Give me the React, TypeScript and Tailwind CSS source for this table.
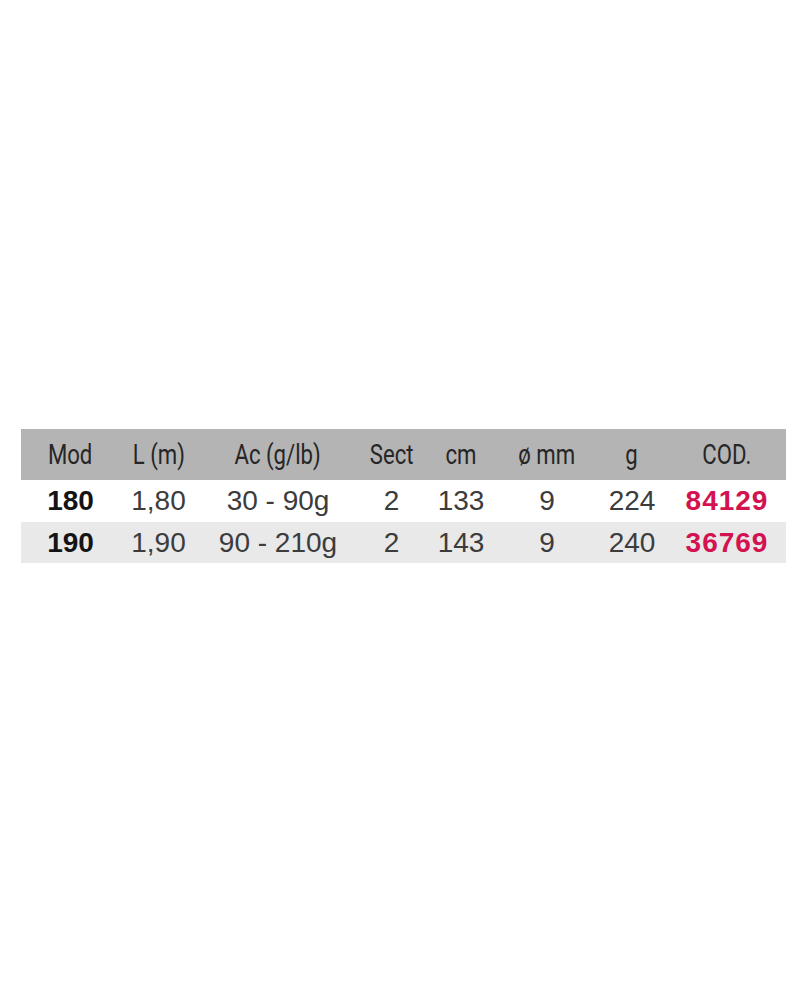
const columns = ['Mod', 'L (m)', 'Ac (g/lb)', 'Sect', 'cm', 'ø mm', 'g', 'COD.'];

const rows = [
  { mod: '180', len: '1,80', ac: '30 - 90g', sect: '2', cm: '133', mm: '9', g: '224', cod: '84129' },
  { mod: '190', len: '1,90', ac: '90 - 210g', sect: '2', cm: '143', mm: '9', g: '240', cod: '36769' },
];

// column widths chosen so each cell's centre lands on the reference
const grid = 'grid grid-cols-[99px_77px_162px_65px_74px_98px_72px_118px]';

function Cell({ children, className = '' }: { children: React.ReactNode; className?: string }) {
  return <div className={`flex items-center justify-center whitespace-nowrap ${className}`}>{children}</div>;
}

export default function App() {
  return (
    <div className="min-h-[1000px] w-[800px] bg-white pt-[429px] pl-[21px] pr-[14px] font-['Liberation_Sans',Arial,sans-serif]">
      <div className="w-[765px]">
        <div className={`${grid} h-[51px] bg-[#b4b4b4] text-[#262626]`}>
          {columns.map((c) => (
            <Cell key={c} className="font-['Roboto','Liberation_Sans',sans-serif] font-normal text-[27px] pt-[1px]">
              <span className="inline-block scale-x-[0.82]">{c}</span>
            </Cell>
          ))}
        </div>
        {rows.map((r, i) => (
          <div key={r.mod} className={`${grid} ${i === 0 ? 'h-[42px] bg-white' : 'h-[41px] bg-[#e9e9e9]'} text-[28px] text-[#3c3c3c]`}>
            <Cell className="font-bold text-[#141414]">{r.mod}</Cell>
            <Cell>{r.len}</Cell>
            <Cell>{r.ac}</Cell>
            <Cell>{r.sect}</Cell>
            <Cell>{r.cm}</Cell>
            <Cell>{r.mm}</Cell>
            <Cell>{r.g}</Cell>
            <Cell className="font-bold text-[#d3124f] tracking-[1px]">{r.cod}</Cell>
          </div>
        ))}
      </div>
    </div>
  );
}
